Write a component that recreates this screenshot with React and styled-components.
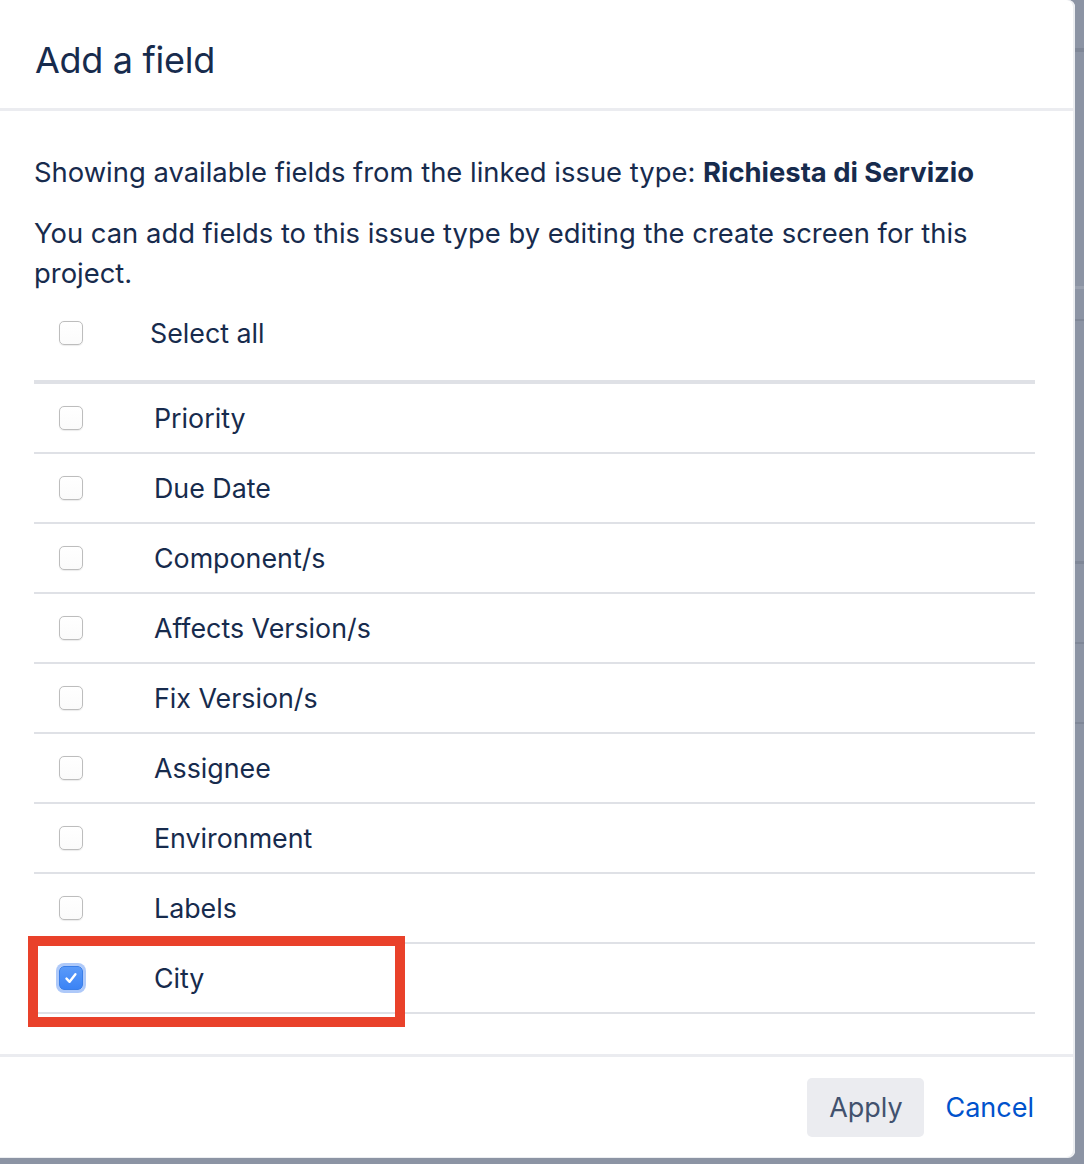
import React from "react";
import styled, { createGlobalStyle, css } from "styled-components";

const GlobalStyle = createGlobalStyle`
  html, body {
    margin: 0;
    padding: 0;
  }
  body {
    font-family: Inter, "Noto Sans", "Liberation Sans", sans-serif;
    color: #172b4d;
    background-color: #8c94a4;
    background-image:
      linear-gradient(to bottom, transparent 48px, #7f8797 48px, #7f8797 52px, transparent 52px),
      linear-gradient(to bottom, transparent 286px, #9aa1af 286px, #9aa1af 289px, transparent 289px),
      linear-gradient(to bottom, transparent 319px, #7f8797 319px, #7f8797 321px, transparent 321px),
      linear-gradient(to bottom, transparent 561px, #7f8797 561px, #7f8797 564px, transparent 564px),
      linear-gradient(to bottom, transparent 642px, #7f8797 642px, #7f8797 644px, transparent 644px),
      linear-gradient(to bottom, transparent 722px, #7f8797 722px, #7f8797 724px, transparent 724px);
  }
`;

const Page = styled.div`
  width: 1084px;
  height: 1164px;
  overflow: hidden;
`;

const Dialog = styled.div`
  width: 1075px;
  background: #ffffff;
  border-radius: 0 7px 7px 0;
  box-shadow: inset -2px 0 0 #eceef1, 0 1px 0 #eceef1;
  display: flex;
  flex-direction: column;
`;

const Header = styled.header`
  height: 96px;
  padding: 12px 0 0 35px;
  display: flex;
  align-items: center;
  border-bottom: 3px solid #ebecf0;
`;

const Title = styled.h2`
  margin: 0;
  font-size: 36px;
  line-height: 1;
  font-weight: 400;
  letter-spacing: -0.3px;
  color: #172b4d;
`;

const Body = styled.div`
  padding: 41px 40px 0 34px;
`;

const Paragraph = styled.p`
  margin: ${(p) => (p.$first ? "0" : "21px")} 0 0 0;
  font-size: 27.4px;
  line-height: 40px;
  color: #172b4d;

  strong {
    font-weight: 700;
  }
`;

const SelectAllRow = styled.div`
  height: 80px;
  display: flex;
  align-items: center;
`;

const List = styled.ul`
  list-style: none;
  margin: 7px 0 0 0;
  padding: 0;
  border-top: 4px solid #dfe1e6;
`;

const Row = styled.li`
  position: relative;
  height: 68px;
  display: flex;
  align-items: center;
  border-bottom: 2px solid #dfe1e6;
`;

const Box = styled.span`
  flex: none;
  width: 24px;
  height: 24px;
  margin-left: 25px;
  box-sizing: border-box;
  border-radius: 5px;
  display: flex;
  align-items: center;
  justify-content: center;
  ${(p) =>
    p.$checked
      ? css`
          background: linear-gradient(#5a9af9, #3b83f5);
          border: 1px solid #3a7ee8;
          box-shadow: 0 0 0 3px rgba(120, 165, 245, 0.6);
        `
      : css`
          background: linear-gradient(#ffffff, #fbfbfb);
          border: 1.5px solid #bdbdbd;
          box-shadow: 0 0.5px 1px rgba(0, 0, 0, 0.08);
        `}
`;

const Label = styled.span`
  margin-left: ${(p) => p.$gap}px;
  font-size: 26.8px;
  line-height: 40px;
  color: #172b4d;
`;

const Highlight = styled.div`
  position: absolute;
  left: -6px;
  top: -8px;
  width: 377px;
  height: 91px;
  box-sizing: border-box;
  border: 10px solid #e9412a;
  pointer-events: none;
`;

const Footer = styled.footer`
  margin-top: 40px;
  border-top: 3px solid #ebecf0;
  padding: 21px 41px 20px 0;
  display: flex;
  justify-content: flex-end;
  align-items: center;
  gap: 21px;
`;

const ApplyButton = styled.button`
  width: 117px;
  height: 59px;
  padding: 0;
  border: none;
  border-radius: 5px;
  background: #ebecf0;
  color: #42526e;
  font-family: inherit;
  font-size: 27px;
  cursor: pointer;
`;

const CancelLink = styled.button`
  border: none;
  background: none;
  padding: 0;
  color: #0052cc;
  font-family: inherit;
  font-size: 27px;
  cursor: pointer;
`;

const Check = () => (
  <svg width="18" height="18" viewBox="0 0 18 18" fill="none">
    <path d="M4.5 9.6 L7.6 12.8 L13.4 5.2" stroke="#fff" strokeWidth="2.4" strokeLinecap="round" strokeLinejoin="round" />
  </svg>
);

const Checkbox = ({ checked }) => (
  <Box $checked={checked}>{checked && <Check />}</Box>
);

const fields = [
  { name: "Priority" },
  { name: "Due Date" },
  { name: "Component/s" },
  { name: "Affects Version/s" },
  { name: "Fix Version/s" },
  { name: "Assignee" },
  { name: "Environment" },
  { name: "Labels" },
  { name: "City", checked: true, highlighted: true },
];

export default function App() {
  return (
    <>
      <GlobalStyle />
      <Page>
        <Dialog>
          <Header>
            <Title>Add a field</Title>
          </Header>
          <Body>
            <Paragraph $first>
              Showing available fields from the linked issue type: <strong>Richiesta di Servizio</strong>
            </Paragraph>
            <Paragraph>
              You can add fields to this issue type by editing the create screen for this project.
            </Paragraph>
            <SelectAllRow>
              <Checkbox />
              <Label $gap={67}>Select all</Label>
            </SelectAllRow>
            <List>
              {fields.map((f) => (
                <Row key={f.name}>
                  <Checkbox checked={f.checked} />
                  <Label $gap={71}>{f.name}</Label>
                  {f.highlighted && <Highlight />}
                </Row>
              ))}
            </List>
          </Body>
          <Footer>
            <ApplyButton>Apply</ApplyButton>
            <CancelLink>Cancel</CancelLink>
          </Footer>
        </Dialog>
      </Page>
    </>
  );
}
